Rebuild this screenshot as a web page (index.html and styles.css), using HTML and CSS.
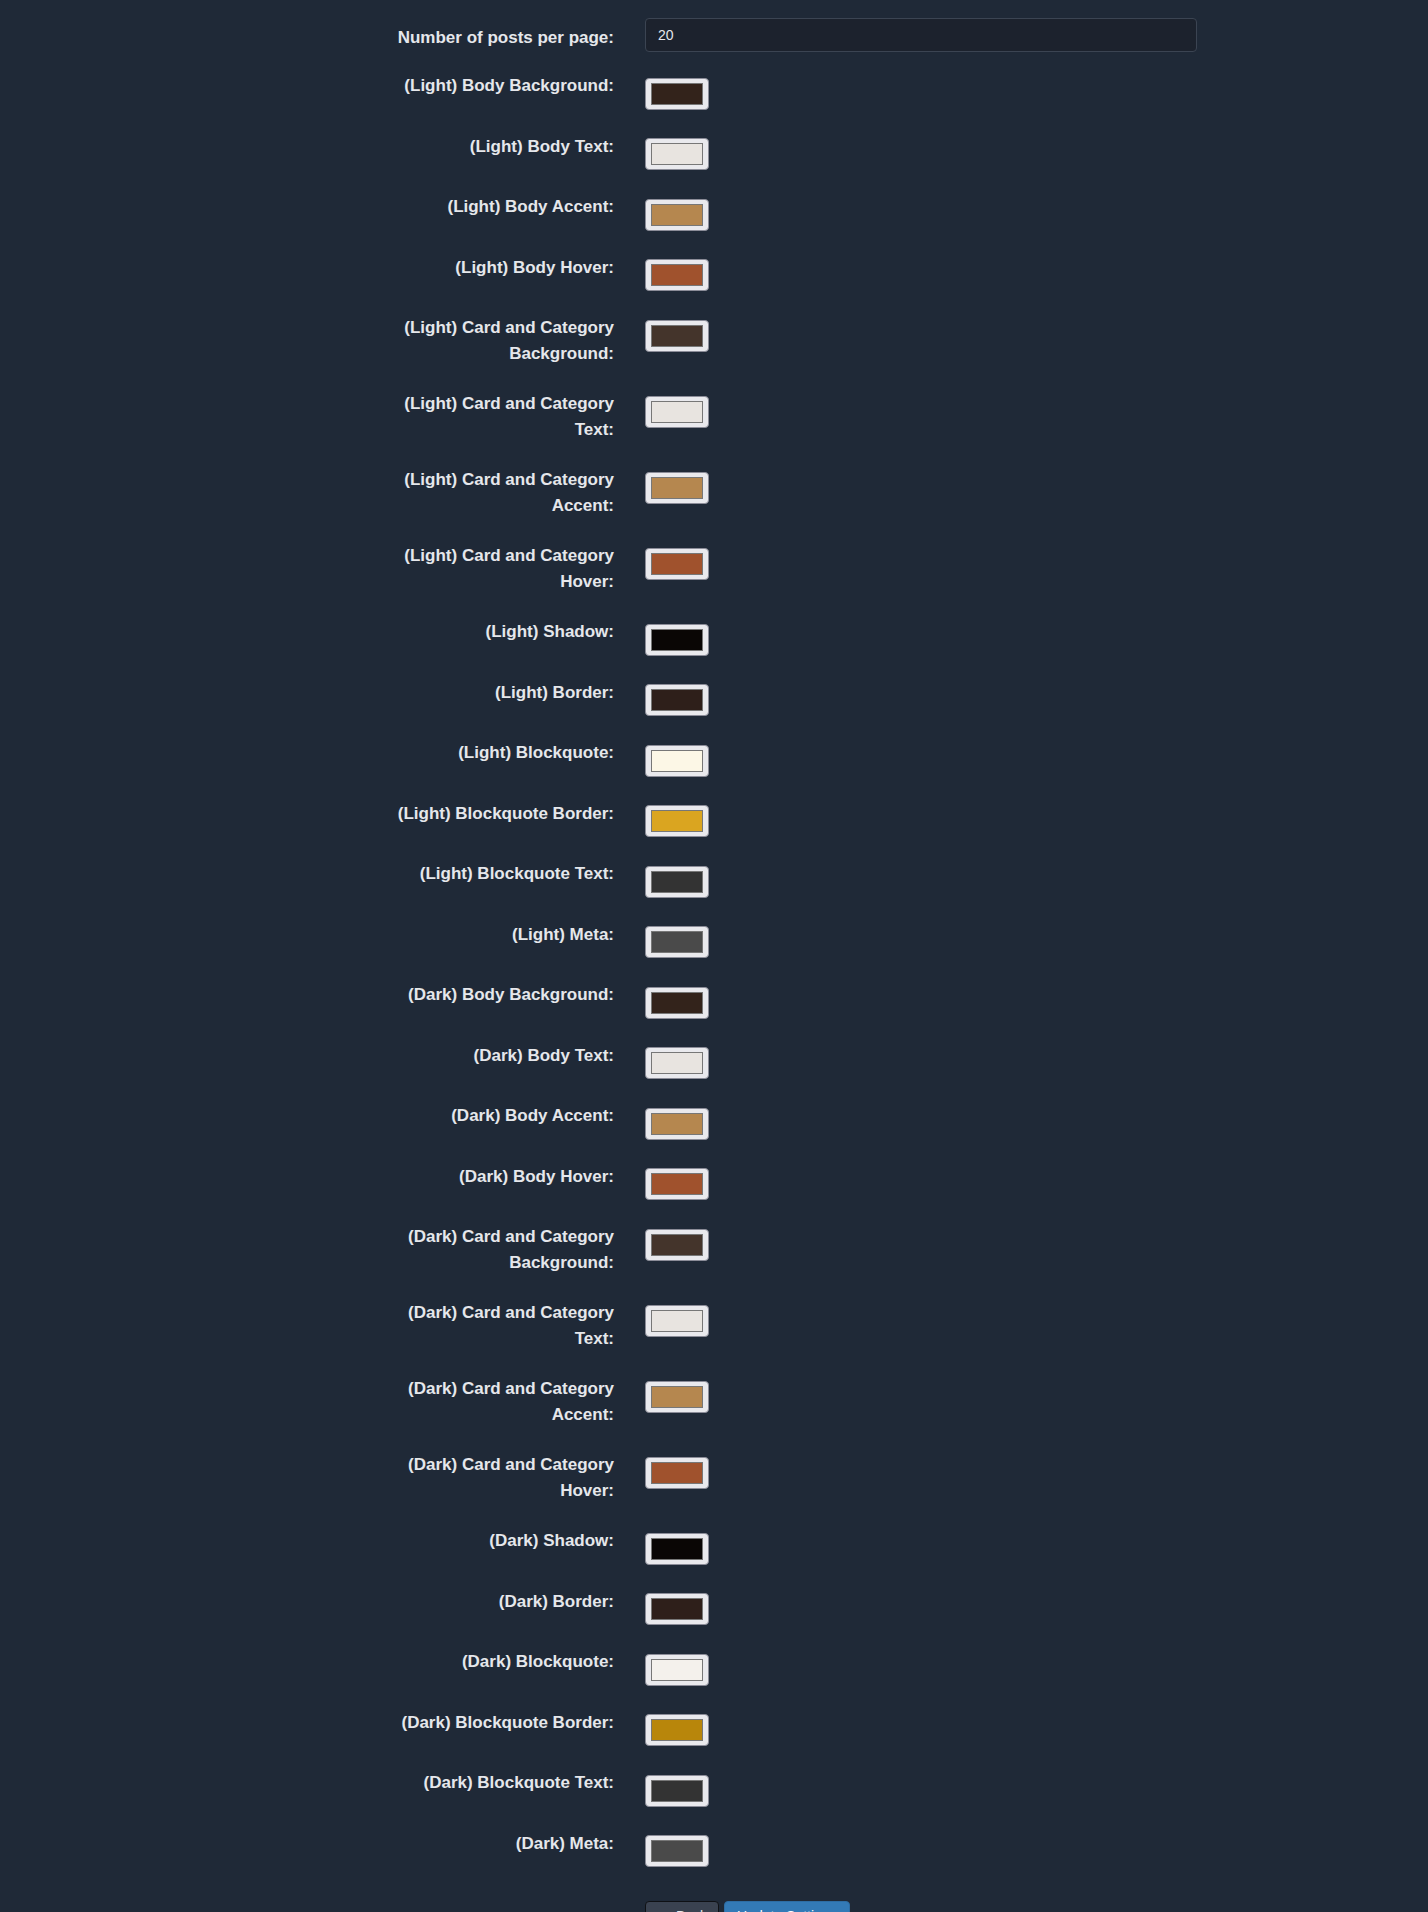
FILE: index.html
```html
<!DOCTYPE html>
<html lang="en">
<head>
<meta charset="utf-8">
<title>Settings</title>
<link rel="stylesheet" href="styles.css">
</head>
<body>
<form class="settings">
  <div class="form-row first">
    <label class="lbl" for="ppp">Number of posts per page:</label>
    <div class="ctl"><input id="ppp" class="text-input" type="text" value="20"></div>
  </div>

  <div class="form-row"><label class="lbl">(Light) Body Background:</label><div class="ctl"><input class="swatch" type="color" value="#33231b"></div></div>
  <div class="form-row"><label class="lbl">(Light) Body Text:</label><div class="ctl"><input class="swatch" type="color" value="#e8e4e0"></div></div>
  <div class="form-row"><label class="lbl">(Light) Body Accent:</label><div class="ctl"><input class="swatch" type="color" value="#b5874f"></div></div>
  <div class="form-row"><label class="lbl">(Light) Body Hover:</label><div class="ctl"><input class="swatch" type="color" value="#a0522d"></div></div>
  <div class="form-row"><label class="lbl">(Light) Card and Category Background:</label><div class="ctl"><input class="swatch" type="color" value="#44342b"></div></div>
  <div class="form-row"><label class="lbl">(Light) Card and Category Text:</label><div class="ctl"><input class="swatch" type="color" value="#e8e4e0"></div></div>
  <div class="form-row"><label class="lbl">(Light) Card and Category Accent:</label><div class="ctl"><input class="swatch" type="color" value="#b5874f"></div></div>
  <div class="form-row"><label class="lbl">(Light) Card and Category Hover:</label><div class="ctl"><input class="swatch" type="color" value="#a0522d"></div></div>
  <div class="form-row"><label class="lbl">(Light) Shadow:</label><div class="ctl"><input class="swatch" type="color" value="#0a0605"></div></div>
  <div class="form-row"><label class="lbl">(Light) Border:</label><div class="ctl"><input class="swatch" type="color" value="#2e1f1a"></div></div>
  <div class="form-row"><label class="lbl">(Light) Blockquote:</label><div class="ctl"><input class="swatch" type="color" value="#fcf7e6"></div></div>
  <div class="form-row"><label class="lbl">(Light) Blockquote Border:</label><div class="ctl"><input class="swatch" type="color" value="#daa520"></div></div>
  <div class="form-row"><label class="lbl">(Light) Blockquote Text:</label><div class="ctl"><input class="swatch" type="color" value="#333333"></div></div>
  <div class="form-row"><label class="lbl">(Light) Meta:</label><div class="ctl"><input class="swatch" type="color" value="#4a4a4a"></div></div>

  <div class="form-row"><label class="lbl">(Dark) Body Background:</label><div class="ctl"><input class="swatch" type="color" value="#33231b"></div></div>
  <div class="form-row"><label class="lbl">(Dark) Body Text:</label><div class="ctl"><input class="swatch" type="color" value="#e8e4e0"></div></div>
  <div class="form-row"><label class="lbl">(Dark) Body Accent:</label><div class="ctl"><input class="swatch" type="color" value="#b5874f"></div></div>
  <div class="form-row"><label class="lbl">(Dark) Body Hover:</label><div class="ctl"><input class="swatch" type="color" value="#a0522d"></div></div>
  <div class="form-row"><label class="lbl">(Dark) Card and Category Background:</label><div class="ctl"><input class="swatch" type="color" value="#44342b"></div></div>
  <div class="form-row"><label class="lbl">(Dark) Card and Category Text:</label><div class="ctl"><input class="swatch" type="color" value="#e8e4e0"></div></div>
  <div class="form-row"><label class="lbl">(Dark) Card and Category Accent:</label><div class="ctl"><input class="swatch" type="color" value="#b5874f"></div></div>
  <div class="form-row"><label class="lbl">(Dark) Card and Category Hover:</label><div class="ctl"><input class="swatch" type="color" value="#a0522d"></div></div>
  <div class="form-row"><label class="lbl">(Dark) Shadow:</label><div class="ctl"><input class="swatch" type="color" value="#0a0605"></div></div>
  <div class="form-row"><label class="lbl">(Dark) Border:</label><div class="ctl"><input class="swatch" type="color" value="#2e1f1a"></div></div>
  <div class="form-row"><label class="lbl">(Dark) Blockquote:</label><div class="ctl"><input class="swatch" type="color" value="#f4f1ec"></div></div>
  <div class="form-row"><label class="lbl">(Dark) Blockquote Border:</label><div class="ctl"><input class="swatch" type="color" value="#b8860b"></div></div>
  <div class="form-row"><label class="lbl">(Dark) Blockquote Text:</label><div class="ctl"><input class="swatch" type="color" value="#333333"></div></div>
  <div class="form-row"><label class="lbl">(Dark) Meta:</label><div class="ctl"><input class="swatch" type="color" value="#4a4a4a"></div></div>

  <div class="form-row actions">
    <div></div>
    <div class="ctl btns">
      <a class="btn btn-back" href="#"><span class="arrow">&larr;</span> Back</a>
      <button class="btn btn-primary" type="submit">Update Settings</button>
    </div>
  </div>
</form>
</body>
</html>
```
FILE: styles.css
```css
html, body {
  margin: 0;
  padding: 0;
  background: #1f2937;
}

body {
  font-family: "Liberation Sans", Arial, Helvetica, sans-serif;
  color: #e5e7eb;
}

.settings {
  padding-top: 18px;
  margin-left: 374px;
}

.form-row {
  display: grid;
  grid-template-columns: 240px 552px;
  column-gap: 31px;
  align-items: start;
  margin-bottom: 18.5px;
}

.form-row.first {
  margin-bottom: 15.5px;
}

.lbl {
  display: block;
  text-align: right;
  font-size: 17px;
  font-weight: bold;
  line-height: 26px;
  padding-top: 5.5px;
  color: #e5e7eb;
}

.first .lbl {
  padding-top: 6.5px;
}

.ctl {
  display: flex;
  align-items: flex-start;
}

.text-input {
  box-sizing: border-box;
  width: 552px;
  height: 34px;
  padding: 0 12px;
  border: 1px solid #3b4452;
  border-radius: 4px;
  background: #1c222d;
  color: #e5e7eb;
  font-family: "Liberation Sans", Arial, sans-serif;
  font-size: 14px;
  outline: none;
}

.swatch {
  -webkit-appearance: none;
  appearance: none;
  box-sizing: border-box;
  width: 64px;
  height: 32px;
  margin: 10px 0 0 0;
  padding: 4px 5px;
  border: 1px solid #8b8c98;
  border-radius: 4px;
  background: #e9e9ed;
  cursor: pointer;
}

.swatch::-webkit-color-swatch-wrapper {
  padding: 0;
}

.swatch::-webkit-color-swatch {
  border: 1px solid #777777;
  border-radius: 0;
}

.form-row.actions {
  margin-top: 33.5px;
  margin-bottom: 0;
}

.btns {
  gap: 5px;
}

.btn {
  box-sizing: border-box;
  display: inline-block;
  height: 34px;
  padding: 4px 12px 8px;
  border-radius: 4px;
  font-family: "Liberation Sans", Arial, sans-serif;
  font-size: 14px;
  line-height: 20px;
  white-space: nowrap;
  text-decoration: none;
  text-align: left;
  cursor: pointer;
}

.btn-back {
  width: 74px;
  background: #3a4250;
  border: 1px solid #0f1115;
  color: #e5e7eb;
}

.arrow {
  display: inline-block;
  width: 14px;
  font-size: 12px;
}

.btn-primary {
  width: 126px;
  background: #337ab7;
  border: 1px solid #2e6da4;
  color: #ffffff;
}
```
